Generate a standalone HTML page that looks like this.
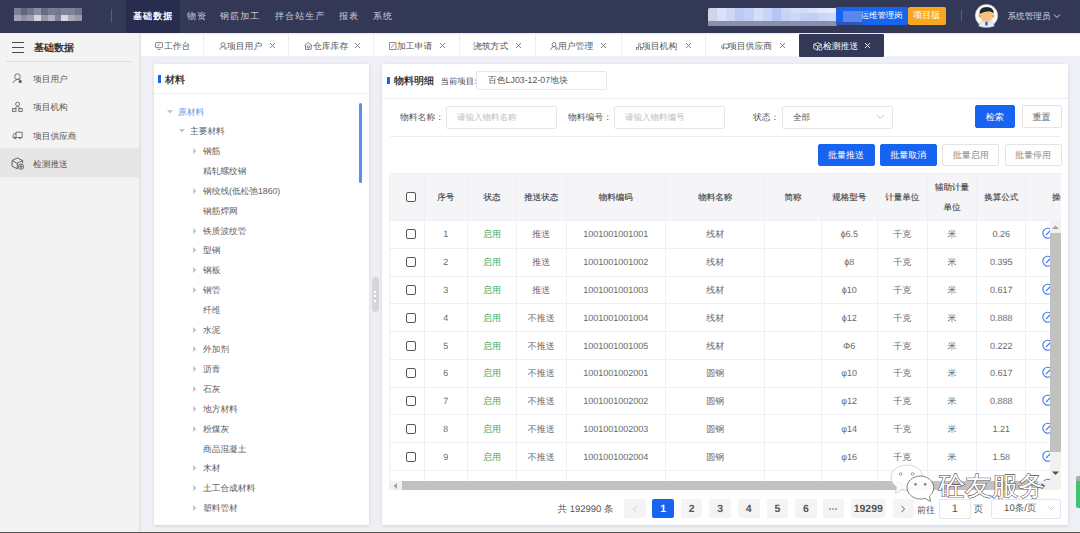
<!DOCTYPE html>
<html><head><meta charset="utf-8">
<style>
*{box-sizing:border-box;margin:0;padding:0}
html,body{width:1080px;height:533px;overflow:hidden;background:#eef0f5;font-family:"Liberation Sans",sans-serif;color:#333;font-size:9px;text-rendering:geometricPrecision}
.a{position:absolute}
#top{left:0;top:0;width:1080px;height:33px;background:#343857}
.nav{top:0;height:33px;line-height:32px;color:#c9cbd8;font-size:9px;letter-spacing:1.1px;white-space:nowrap}
#side{left:0;top:33px;width:141px;height:500px;background:#f3f3f3;box-shadow:inset -2px 0 1.5px -0.5px #e0e0e2}
#tabs{left:141px;top:33px;width:939px;height:23px;background:#fff;border-top:1px solid #f4f4f8}
.tab{top:34px;height:22px;line-height:22px;font-size:9px;color:#444;white-space:nowrap;border-left:1px solid #ececec;text-align:center}
.tabt{top:39.7px;font-size:8.8px;line-height:12px;white-space:nowrap}
.card{background:#fff;box-shadow:0 1px 3px rgba(60,70,100,0.16)}
.tr{font-size:8.7px;color:#555;white-space:nowrap;line-height:12px}

.btn{height:22px;line-height:20px;text-align:center;font-size:9px;border-radius:2px;border:1px solid #e4e4e4;color:#777;background:#fff}
.btn.p{background:#1764f0;border-color:#1764f0;color:#fff}
.inp{height:22.5px;border:1px solid #e4e6ea;border-radius:2px;background:#fff;line-height:21.5px;font-size:8.5px;color:#bbb;padding-left:10px}
.lbl{font-size:8.8px;color:#555;line-height:23.5px;white-space:nowrap}
.th{font-size:8.5px;color:#444;font-weight:normal;-webkit-text-stroke:0.15px #444;text-align:center;white-space:nowrap}
.td{font-size:9px;color:#6a6a6a;text-align:center;white-space:nowrap}
.vl{width:1px;background:#eef0f6}
.hl{height:1px;background:#eef0f6}
.cb{width:10px;height:10px;border:1px solid #555;border-radius:2px;background:#fff}
.pg{top:498.5px;height:19.5px;line-height:20.5px;width:21.5px;background:#f4f4f5;color:#555;font-weight:bold;font-size:10.5px;text-align:center;border-radius:2px}
</style></head><body>
<!-- top bar -->
<div class="a" id="top"></div>
<div class="a" style="left:13.70px;top:8px;width:6.9px;height:6.6px;background:#7d8096;filter:blur(0.3px)"></div><div class="a" style="left:13.70px;top:14.6px;width:6.9px;height:6.7px;background:#a3a5b5;filter:blur(0.3px)"></div><div class="a" style="left:20.52px;top:8px;width:6.9px;height:6.6px;background:#62677f;filter:blur(0.3px)"></div><div class="a" style="left:20.52px;top:14.6px;width:6.9px;height:6.7px;background:#8e91a5;filter:blur(0.3px)"></div><div class="a" style="left:27.34px;top:8px;width:6.9px;height:6.6px;background:#727690;filter:blur(0.3px)"></div><div class="a" style="left:27.34px;top:14.6px;width:6.9px;height:6.7px;background:#9c9eb0;filter:blur(0.3px)"></div><div class="a" style="left:34.16px;top:8px;width:6.9px;height:6.6px;background:#8a8da3;filter:blur(0.3px)"></div><div class="a" style="left:34.16px;top:14.6px;width:6.9px;height:6.7px;background:#d3d5de;filter:blur(0.3px)"></div><div class="a" style="left:40.98px;top:8px;width:6.9px;height:6.6px;background:#686c85;filter:blur(0.3px)"></div><div class="a" style="left:40.98px;top:14.6px;width:6.9px;height:6.7px;background:#9598ab;filter:blur(0.3px)"></div><div class="a" style="left:47.80px;top:8px;width:6.9px;height:6.6px;background:#7a7d95;filter:blur(0.3px)"></div><div class="a" style="left:47.80px;top:14.6px;width:6.9px;height:6.7px;background:#b0b2c0;filter:blur(0.3px)"></div><div class="a" style="left:54.62px;top:8px;width:6.9px;height:6.6px;background:#737790;filter:blur(0.3px)"></div><div class="a" style="left:54.62px;top:14.6px;width:6.9px;height:6.7px;background:#7f8298;filter:blur(0.3px)"></div><div class="a" style="left:61.44px;top:8px;width:6.9px;height:6.6px;background:#7f8298;filter:blur(0.3px)"></div><div class="a" style="left:61.44px;top:14.6px;width:6.9px;height:6.7px;background:#d7d8e0;filter:blur(0.3px)"></div><div class="a" style="left:68.26px;top:8px;width:6.9px;height:6.6px;background:#7d8096;filter:blur(0.3px)"></div><div class="a" style="left:68.26px;top:14.6px;width:6.9px;height:6.7px;background:#aaacbb;filter:blur(0.3px)"></div><div class="a" style="left:75.08px;top:8px;width:6.9px;height:6.6px;background:#717590;filter:blur(0.3px)"></div><div class="a" style="left:75.08px;top:14.6px;width:6.9px;height:6.7px;background:#9799ac;filter:blur(0.3px)"></div>
<div class="a" style="left:111px;top:9px;width:1px;height:13px;background:#5a5e7c"></div>
<div class="a" style="left:126px;top:0;width:54px;height:33px;background:#282c4e"></div>
<div class="a nav" style="left:133px;color:#fff;font-weight:bold">基础数据</div>
<div class="a nav" style="left:187px">物资</div>
<div class="a nav" style="left:220px">钢筋加工</div>
<div class="a nav" style="left:275px">拌合站生产</div>
<div class="a nav" style="left:339px">报表</div>
<div class="a nav" style="left:373px">系统</div>

<div class="a" style="left:707.6px;top:7.5px;width:129px;height:18px;border-radius:2px 3px 0 0;overflow:hidden;background:#8a90ab"><div class="a" style="left:0.0px;top:0;width:9.3px;height:13.4px;background:#d0d4e6"></div><div class="a" style="left:9.2px;top:0;width:9.3px;height:13.4px;background:#d8e0fa"></div><div class="a" style="left:18.4px;top:0;width:9.3px;height:13.4px;background:#cdd8f8"></div><div class="a" style="left:27.6px;top:0;width:9.3px;height:13.4px;background:#bccaf6"></div><div class="a" style="left:36.8px;top:0;width:9.3px;height:13.4px;background:#c3cff7"></div><div class="a" style="left:46.0px;top:0;width:9.3px;height:13.4px;background:#d5def9"></div><div class="a" style="left:55.2px;top:0;width:9.3px;height:13.4px;background:#c8d3f8"></div><div class="a" style="left:64.4px;top:0;width:9.3px;height:13.4px;background:#b4c6f6"></div><div class="a" style="left:73.6px;top:0;width:9.3px;height:13.4px;background:#c6d2f8"></div><div class="a" style="left:82.8px;top:0;width:9.3px;height:13.4px;background:#cdd7f8"></div><div class="a" style="left:92.0px;top:0;width:9.3px;height:13.4px;background:#c4d0f7"></div><div class="a" style="left:101.2px;top:0;width:9.3px;height:13.4px;background:#c0cdf6"></div><div class="a" style="left:110.4px;top:0;width:9.3px;height:13.4px;background:#cbd5f8"></div><div class="a" style="left:119.6px;top:0;width:9.3px;height:13.4px;background:#d0d9f8"></div><div class="a" style="left:70px;top:0;width:59px;height:5px;background:linear-gradient(90deg,rgba(230,236,252,0),#e8edfc)"></div></div>

<div class="a" style="left:836.2px;top:7px;width:71.5px;height:17.5px;background:#1764f0;border-radius:0 2px 2px 0;color:#fff;font-size:8.4px;line-height:17.5px;padding-left:24.5px;white-space:nowrap">运维管理岗</div>
<div class="a" style="left:843px;top:11.4px;width:19px;height:11.5px;background:#5a87ee;filter:blur(0.5px)"></div><div class="a" style="left:836.2px;top:21.5px;width:27px;height:3.5px;background:#2f55b5;border-radius:0 0 4px 0;filter:blur(0.4px)"></div>
<div class="a" style="left:907.7px;top:7px;width:38px;height:17.5px;background:#f7a81e;border-radius:2px;color:#fff;font-size:9px;line-height:17.5px;text-align:center">项目版</div>
<div class="a" style="left:961px;top:10px;width:1px;height:11px;background:#5a5e7c"></div>
<svg class="a" style="left:974px;top:3px" width="25" height="25" viewBox="0 0 25 25">
<circle cx="12.5" cy="12.6" r="11.2" fill="#fafafa" stroke="#c8c8cc" stroke-width="0.6"/>
<path d="M4.5 23 Q6 17.5 12.5 17.5 Q19 17.5 20.5 23 Q16.5 24.5 12.5 24.5 Q8.5 24.5 4.5 23Z" fill="#e8ecf2" stroke="#9aa" stroke-width="0.4"/>
<rect x="11.3" y="18" width="2.4" height="4.5" fill="#1f6cc8"/>
<ellipse cx="12.5" cy="12.5" rx="6.6" ry="6.5" fill="#f8c182"/>
<ellipse cx="5.8" cy="13" rx="1.3" ry="1.8" fill="#f2a85e"/><ellipse cx="19.2" cy="13" rx="1.3" ry="1.8" fill="#f2a85e"/>
<path d="M5.5 11 Q5 4 12.8 4 Q20 4.2 19.6 10.5 Q18 8.5 15 8.2 Q10 8.5 5.5 11Z" fill="#1d2a32"/>
</svg>




<div class="a nav" style="left:1007.5px;font-size:8.6px;letter-spacing:0;color:#d8dae4">系统管理员</div>
<svg class="a" style="left:1053px;top:11.5px" width="8" height="8" viewBox="0 0 8 8"><path d="M1 2.5 L4 5.5 L7 2.5" stroke="#d0d2dc" stroke-width="1" fill="none"/></svg>

<!-- sidebar -->
<div class="a" id="side"></div>
<div class="a" style="left:0;top:148px;width:140px;height:29px;background:#e6e6e6"></div>
<div class="a" style="left:12px;top:42.2px;width:11.5px;height:1.3px;background:#4a4a4a"></div>
<div class="a" style="left:12px;top:47px;width:11.5px;height:1.3px;background:#4a4a4a"></div>
<div class="a" style="left:12px;top:51.8px;width:11.5px;height:1.3px;background:#4a4a4a"></div>
<div class="a" style="left:34px;top:41.5px;font-size:10px;font-weight:bold;color:#333;line-height:14px">基础数据</div>
<div class="a" style="left:6px;top:61px;width:125px;height:1px;background:#dcdcdc"></div>
<svg class="a" style="left:10px;top:70px" width="14" height="14" viewBox="0 0 14 14" fill="none" stroke="#666" stroke-width="0.9">
<circle cx="7.5" cy="6.6" r="2.8"/><path d="M3.1 12.9 Q4 9.6 7.5 9.4 Q9 9.4 10 10"/><circle cx="10.2" cy="11.5" r="1.3" fill="#666"/></svg>
<svg class="a" style="left:10px;top:99px" width="14" height="14" viewBox="0 0 14 14" fill="none" stroke="#666" stroke-width="0.9">
<circle cx="7.6" cy="5.2" r="2"/><path d="M7.6 7.2 L4.4 10 M7.6 7.2 L10.6 10"/><rect x="2.6" y="9.6" width="3.4" height="2.8"/><rect x="8.8" y="9.6" width="3.4" height="2.8"/></svg>
<svg class="a" style="left:10px;top:128px" width="14" height="14" viewBox="0 0 14 14" fill="none" stroke="#666" stroke-width="0.9">
<path d="M6 4.2 H12.2 V9.6 H6 Z"/><path d="M6 5.6 H4.2 L3.1 7.4 V9.6 H6"/><circle cx="5" cy="10" r="0.8"/><circle cx="10" cy="10" r="0.8"/></svg>
<svg class="a" style="left:10px;top:156px" width="15" height="15" viewBox="0 0 15 15" fill="none" stroke="#555" stroke-width="0.9">
<path d="M7.3 1.9 L12.6 4.6 V7.2 M7.3 1.9 L2 4.6 V10.2 L7.3 12.8 M2 4.6 L7.3 7.3 L12.6 4.6 M7.3 7.3 V12.8"/><circle cx="11" cy="10.6" r="2.6" fill="#e6e6e6"/><path d="M9.6 10.6 H12.4 M11 9.2 V12"/></svg>
<div class="a tr" style="left:33px;top:73px;color:#555">项目用户</div>
<div class="a tr" style="left:33px;top:101px;color:#555">项目机构</div>
<div class="a tr" style="left:33px;top:130px;color:#555">项目供应商</div>
<div class="a tr" style="left:33px;top:158px;color:#555">检测推送</div>

<!-- tabs -->
<div class="a" id="tabs"></div>
<div class="a" style="left:141px;top:33px;width:939px;height:1px;background:#e9eaf0"></div>
<div class="a" style="left:203px;top:34px;width:1px;height:22px;background:#eeeff3"></div>
<div class="a" style="left:288px;top:34px;width:1px;height:22px;background:#eeeff3"></div>
<div class="a" style="left:373px;top:34px;width:1px;height:22px;background:#eeeff3"></div>
<div class="a" style="left:459px;top:34px;width:1px;height:22px;background:#eeeff3"></div>
<div class="a" style="left:535px;top:34px;width:1px;height:22px;background:#eeeff3"></div>
<div class="a" style="left:621px;top:34px;width:1px;height:22px;background:#eeeff3"></div>
<div class="a" style="left:705px;top:34px;width:1px;height:22px;background:#eeeff3"></div>
<div class="a" style="left:799px;top:34px;width:85px;height:22.5px;background:#343857;border-radius:1px"></div>
<svg class="a" style="left:154.5px;top:42px" width="8" height="8" viewBox="0 0 8 8" fill="none" stroke="#666" stroke-width="0.8"><rect x="0.6" y="0.6" width="6.8" height="5" rx="0.6"/><path d="M2.5 7.4H5.5M2.4 4 L4.6 2.2"/></svg>
<svg class="a" style="left:218.5px;top:42px" width="9" height="8" viewBox="0 0 9 8" fill="none" stroke="#666" stroke-width="0.8"><circle cx="4" cy="2.6" r="2"/><path d="M0.8 7.6Q1.4 4.8 4 4.6Q5.5 4.6 6.3 5.4"/><circle cx="6.6" cy="6.5" r="0.9"/></svg>
<svg class="a" style="left:304px;top:42px" width="9" height="8" viewBox="0 0 9 8" fill="none" stroke="#666" stroke-width="0.8"><path d="M0.6 3.6L4.3 0.7L8 3.6M1.5 3V7.4H7.2V3"/><circle cx="4.3" cy="5" r="1.2"/></svg>
<svg class="a" style="left:389px;top:42px" width="8" height="8" viewBox="0 0 8 8" fill="none" stroke="#777" stroke-width="0.8"><rect x="0.6" y="0.6" width="6.4" height="6.8"/><path d="M2 5.6L5.8 2"/></svg>
<svg class="a" style="left:550px;top:42px" width="9" height="8" viewBox="0 0 9 8" fill="none" stroke="#666" stroke-width="0.8"><circle cx="4" cy="2.6" r="2"/><path d="M0.8 7.6Q1.4 4.8 4 4.6Q5.5 4.6 6.3 5.4"/><circle cx="6.6" cy="6.5" r="0.9"/></svg>
<svg class="a" style="left:635.5px;top:42.5px" width="7" height="7" viewBox="0 0 8 8" fill="none" stroke="#666" stroke-width="0.8"><circle cx="4" cy="1.8" r="1.3"/><path d="M4 3.1L2 5M4 3.1L6 5"/><rect x="0.6" y="5" width="2.4" height="2.2"/><rect x="5" y="5" width="2.4" height="2.2"/></svg>
<svg class="a" style="left:720.5px;top:42.5px" width="8" height="7" viewBox="0 0 9 8" fill="none" stroke="#666" stroke-width="0.8"><path d="M3 1.2H8.4V5.6H3ZM3 2.4H1.6L0.7 3.8V5.6H3"/><circle cx="2.4" cy="6.4" r="0.6"/><circle cx="6.6" cy="6.4" r="0.6"/></svg>
<svg class="a" style="left:812.5px;top:41.5px" width="10" height="9" viewBox="0 0 10 9" fill="none" stroke="#fff" stroke-width="0.8"><path d="M4.6 0.6L8.4 2.4V4.2M4.6 0.6L0.8 2.4V6.4L4.6 8.3M0.8 2.4L4.6 4.2L8.4 2.4M4.6 4.2V8.3"/><circle cx="7.4" cy="6.6" r="1.8" fill="#33375a"/></svg>
<div class="a tabt" style="left:164px;color:#555">工作台</div>
<div class="a tabt" style="left:227px;color:#555">项目用户</div>
<svg class="a" style="left:269px;top:42px" width="7" height="7" viewBox="0 0 7 7"><path d="M1 1L6 6M6 1L1 6" stroke="#777" stroke-width="0.9"/></svg>
<div class="a tabt" style="left:313px;color:#555">仓库库存</div>
<svg class="a" style="left:354px;top:42px" width="7" height="7" viewBox="0 0 7 7"><path d="M1 1L6 6M6 1L1 6" stroke="#777" stroke-width="0.9"/></svg>
<div class="a tabt" style="left:397px;color:#555">加工申请</div>
<svg class="a" style="left:439px;top:42px" width="7" height="7" viewBox="0 0 7 7"><path d="M1 1L6 6M6 1L1 6" stroke="#777" stroke-width="0.9"/></svg>
<div class="a tabt" style="left:473px;color:#555">浇筑方式</div>
<svg class="a" style="left:515px;top:42px" width="7" height="7" viewBox="0 0 7 7"><path d="M1 1L6 6M6 1L1 6" stroke="#777" stroke-width="0.9"/></svg>
<div class="a tabt" style="left:558px;color:#555">用户管理</div>
<svg class="a" style="left:600px;top:42px" width="7" height="7" viewBox="0 0 7 7"><path d="M1 1L6 6M6 1L1 6" stroke="#777" stroke-width="0.9"/></svg>
<div class="a tabt" style="left:642px;color:#555">项目机构</div>
<svg class="a" style="left:685px;top:42px" width="7" height="7" viewBox="0 0 7 7"><path d="M1 1L6 6M6 1L1 6" stroke="#777" stroke-width="0.9"/></svg>
<div class="a tabt" style="left:728px;color:#555">项目供应商</div>
<svg class="a" style="left:779px;top:42px" width="7" height="7" viewBox="0 0 7 7"><path d="M1 1L6 6M6 1L1 6" stroke="#777" stroke-width="0.9"/></svg>
<div class="a tabt" style="left:823px;color:#fff">检测推送</div>
<svg class="a" style="left:864px;top:42px" width="7" height="7" viewBox="0 0 7 7"><path d="M1 1L6 6M6 1L1 6" stroke="#fff" stroke-width="0.9"/></svg>

<!-- cards -->
<div class="a card" style="left:154px;top:64px;width:215px;height:461px"></div>

<div class="a card" style="left:382px;top:64px;width:686px;height:461px"></div>
<div class="a" style="left:158px;top:75px;width:3px;height:8px;background:#1764f0"></div>
<div class="a" style="left:165px;top:73.5px;font-size:10px;color:#222;-webkit-text-stroke:0.25px #222;line-height:14px">材料</div>
<div class="a" style="left:154px;top:93px;width:215px;height:1px;background:#eceef2"></div>
<div class="a" style="left:359px;top:103px;width:3px;height:80px;background:#5b8def;border-radius:1.5px"></div>
<div class="a tr" style="left:178px;top:105.6px;color:#6497f0">原材料</div>
<svg class="a" style="left:167px;top:109.6px" width="6" height="4" viewBox="0 0 6 4"><path d="M0 0H6L3 3.5Z" fill="#c4c6cc"/></svg>
<div class="a tr" style="left:190px;top:125.4px;color:#5e5e5e">主要材料</div>
<svg class="a" style="left:179px;top:129.4px" width="6" height="4" viewBox="0 0 6 4"><path d="M0 0H6L3 3.5Z" fill="#c4c6cc"/></svg>
<div class="a tr" style="left:203px;top:145.2px;color:#5e5e5e">钢筋</div>
<svg class="a" style="left:193px;top:148.2px" width="4" height="6" viewBox="0 0 4 6"><path d="M0 0V6L3.5 3Z" fill="#c4c6cc"/></svg>
<div class="a tr" style="left:203px;top:165.1px;color:#5e5e5e">精轧螺纹钢</div>
<div class="a tr" style="left:203px;top:184.9px;color:#5e5e5e">钢绞线(低松弛1860)</div>
<svg class="a" style="left:193px;top:187.9px" width="4" height="6" viewBox="0 0 4 6"><path d="M0 0V6L3.5 3Z" fill="#c4c6cc"/></svg>
<div class="a tr" style="left:203px;top:204.7px;color:#5e5e5e">钢筋焊网</div>
<div class="a tr" style="left:203px;top:224.5px;color:#5e5e5e">铁质波纹管</div>
<svg class="a" style="left:193px;top:227.5px" width="4" height="6" viewBox="0 0 4 6"><path d="M0 0V6L3.5 3Z" fill="#c4c6cc"/></svg>
<div class="a tr" style="left:203px;top:244.3px;color:#5e5e5e">型钢</div>
<svg class="a" style="left:193px;top:247.3px" width="4" height="6" viewBox="0 0 4 6"><path d="M0 0V6L3.5 3Z" fill="#c4c6cc"/></svg>
<div class="a tr" style="left:203px;top:264.2px;color:#5e5e5e">钢板</div>
<svg class="a" style="left:193px;top:267.2px" width="4" height="6" viewBox="0 0 4 6"><path d="M0 0V6L3.5 3Z" fill="#c4c6cc"/></svg>
<div class="a tr" style="left:203px;top:284.0px;color:#5e5e5e">钢管</div>
<svg class="a" style="left:193px;top:287.0px" width="4" height="6" viewBox="0 0 4 6"><path d="M0 0V6L3.5 3Z" fill="#c4c6cc"/></svg>
<div class="a tr" style="left:203px;top:303.8px;color:#5e5e5e">纤维</div>
<div class="a tr" style="left:203px;top:323.6px;color:#5e5e5e">水泥</div>
<svg class="a" style="left:193px;top:326.6px" width="4" height="6" viewBox="0 0 4 6"><path d="M0 0V6L3.5 3Z" fill="#c4c6cc"/></svg>
<div class="a tr" style="left:203px;top:343.4px;color:#5e5e5e">外加剂</div>
<svg class="a" style="left:193px;top:346.4px" width="4" height="6" viewBox="0 0 4 6"><path d="M0 0V6L3.5 3Z" fill="#c4c6cc"/></svg>
<div class="a tr" style="left:203px;top:363.3px;color:#5e5e5e">沥青</div>
<svg class="a" style="left:193px;top:366.3px" width="4" height="6" viewBox="0 0 4 6"><path d="M0 0V6L3.5 3Z" fill="#c4c6cc"/></svg>
<div class="a tr" style="left:203px;top:383.1px;color:#5e5e5e">石灰</div>
<svg class="a" style="left:193px;top:386.1px" width="4" height="6" viewBox="0 0 4 6"><path d="M0 0V6L3.5 3Z" fill="#c4c6cc"/></svg>
<div class="a tr" style="left:203px;top:402.9px;color:#5e5e5e">地方材料</div>
<svg class="a" style="left:193px;top:405.9px" width="4" height="6" viewBox="0 0 4 6"><path d="M0 0V6L3.5 3Z" fill="#c4c6cc"/></svg>
<div class="a tr" style="left:203px;top:422.7px;color:#5e5e5e">粉煤灰</div>
<svg class="a" style="left:193px;top:425.7px" width="4" height="6" viewBox="0 0 4 6"><path d="M0 0V6L3.5 3Z" fill="#c4c6cc"/></svg>
<div class="a tr" style="left:203px;top:442.5px;color:#5e5e5e">商品混凝土</div>
<div class="a tr" style="left:203px;top:462.4px;color:#5e5e5e">木材</div>
<svg class="a" style="left:193px;top:465.4px" width="4" height="6" viewBox="0 0 4 6"><path d="M0 0V6L3.5 3Z" fill="#c4c6cc"/></svg>
<div class="a tr" style="left:203px;top:482.2px;color:#5e5e5e">土工合成材料</div>
<svg class="a" style="left:193px;top:485.2px" width="4" height="6" viewBox="0 0 4 6"><path d="M0 0V6L3.5 3Z" fill="#c4c6cc"/></svg>
<div class="a tr" style="left:203px;top:502.0px;color:#5e5e5e">塑料管材</div>
<svg class="a" style="left:193px;top:505.0px" width="4" height="6" viewBox="0 0 4 6"><path d="M0 0V6L3.5 3Z" fill="#c4c6cc"/></svg>
<div class="a" style="left:372px;top:277px;width:6.5px;height:35px;background:#d6d6d8;border-radius:3.5px"></div>
<div class="a" style="left:374.3px;top:290.5px;width:2px;height:2px;background:#fff"></div>
<div class="a" style="left:374.3px;top:295px;width:2px;height:2px;background:#fff"></div>
<div class="a" style="left:374.3px;top:299.5px;width:2px;height:2px;background:#fff"></div>
<div class="a" style="left:386.5px;top:76.5px;width:3px;height:7px;background:#1764f0"></div>
<div class="a" style="left:394px;top:75px;font-size:10px;color:#222;-webkit-text-stroke:0.25px #222;line-height:14px">物料明细</div>
<div class="a lbl" style="left:440.5px;top:70px;font-size:8.4px;color:#444">当前项目:</div>
<div class="a" style="left:476px;top:71px;width:131px;height:19px;border:1px solid #e6e8ec;border-radius:2px;font-size:8.8px;color:#555;line-height:17px;padding-left:11px;white-space:nowrap">百色LJ03-12-07地块</div>
<div class="a" style="left:382px;top:98px;width:686px;height:1px;background:#eceef2"></div>
<div class="a lbl" style="left:400px;top:106px">物料名称：</div>
<div class="a inp" style="left:446px;top:106px;width:111px">请输入物料名称</div>
<div class="a lbl" style="left:568px;top:106px">物料编号：</div>
<div class="a inp" style="left:614px;top:106px;width:111px">请输入物料编号</div>
<div class="a lbl" style="left:753px;top:106px">状态：</div>
<div class="a inp" style="left:782px;top:106px;width:111px;color:#555">全部</div>
<svg class="a" style="left:876px;top:114px" width="9" height="6" viewBox="0 0 9 6"><path d="M1 1L4.5 4.5L8 1" stroke="#bbb" stroke-width="0.9" fill="none"/></svg>
<div class="a btn p" style="left:975px;top:105px;width:39.5px;height:23px;line-height:22.5px">检索</div>
<div class="a btn" style="left:1021.5px;top:105px;width:40px;height:23px;line-height:22.5px;color:#666">重置</div>
<div class="a" style="left:390px;top:136px;width:671px;height:1px;background:#eceef2"></div>
<div class="a btn p" style="left:817.5px;top:143.5px;width:57px;height:22px;color:#fff">批量推送</div>
<div class="a btn p" style="left:879.7px;top:143.5px;width:57px;height:22px;color:#fff">批量取消</div>
<div class="a btn" style="left:942.2px;top:143.5px;width:57px;height:22px;color:#888">批量启用</div>
<div class="a btn" style="left:1004.5px;top:143.5px;width:57px;height:22px;color:#888">批量停用</div>
<div class="a" style="left:389px;top:173px;width:672px;height:308px;overflow:hidden;background:#fff">
<div class="a" style="left:0;top:0;width:700px;height:47.5px;background:#f5f5f7"></div>
<div class="a hl" style="left:0;top:0;width:700px"></div>
<div class="a vl" style="left:35px;top:0;height:320px"></div>
<div class="a vl" style="left:78px;top:0;height:320px"></div>
<div class="a vl" style="left:127px;top:0;height:320px"></div>
<div class="a vl" style="left:177px;top:0;height:320px"></div>
<div class="a vl" style="left:276px;top:0;height:320px"></div>
<div class="a vl" style="left:375px;top:0;height:320px"></div>
<div class="a vl" style="left:432px;top:0;height:320px"></div>
<div class="a vl" style="left:488px;top:0;height:320px"></div>
<div class="a vl" style="left:538px;top:0;height:320px"></div>
<div class="a vl" style="left:587px;top:0;height:320px"></div>
<div class="a vl" style="left:636px;top:0;height:320px"></div>
<div class="a vl" style="left:0;top:0;height:320px"></div>
<div class="a hl" style="left:0;top:47px;width:700px"></div>
<div class="a hl" style="left:0;top:75px;width:700px"></div>
<div class="a hl" style="left:0;top:103px;width:700px"></div>
<div class="a hl" style="left:0;top:130px;width:700px"></div>
<div class="a hl" style="left:0;top:158px;width:700px"></div>
<div class="a hl" style="left:0;top:186px;width:700px"></div>
<div class="a hl" style="left:0;top:214px;width:700px"></div>
<div class="a hl" style="left:0;top:241px;width:700px"></div>
<div class="a hl" style="left:0;top:269px;width:700px"></div>
<div class="a hl" style="left:0;top:297px;width:700px"></div>
<div class="a hl" style="left:0;top:325px;width:700px"></div>
<div class="a cb" style="left:16.7px;top:19.4px"></div>
<div class="a th" style="left:35.3px;width:43.1px;top:18.0px;line-height:12px">序号</div>
<div class="a th" style="left:78.4px;width:49.1px;top:18.0px;line-height:12px">状态</div>
<div class="a th" style="left:127.5px;width:49.6px;top:18.0px;line-height:12px">推送状态</div>
<div class="a th" style="left:177.1px;width:99.5px;top:18.0px;line-height:12px">物料编码</div>
<div class="a th" style="left:276.6px;width:99.1px;top:18.0px;line-height:12px">物料名称</div>
<div class="a th" style="left:375.7px;width:56.4px;top:18.0px;line-height:12px">简称</div>
<div class="a th" style="left:432.1px;width:56.2px;top:18.0px;line-height:12px">规格型号</div>
<div class="a th" style="left:488.3px;width:50.0px;top:18.0px;line-height:12px">计量单位</div>
<div class="a th" style="left:538.3px;width:49.4px;top:4px;line-height:20.3px">辅助计量<br>单位</div>
<div class="a th" style="left:587.7px;width:49.0px;top:18.0px;line-height:12px">换算公式</div>
<div class="a th" style="left:663px;top:18px;line-height:12px">操作</div>
<div class="a cb" style="left:16.7px;top:56.4px"></div>
<div class="a td" style="left:35.3px;width:43.1px;top:55.4px;line-height:12px">1</div>
<div class="a td" style="left:78.4px;width:49.1px;top:55.4px;line-height:12px;color:#3aa865">启用</div>
<div class="a td" style="left:127.5px;width:49.6px;top:55.4px;line-height:12px">推送</div>
<div class="a td" style="left:177.1px;width:99.5px;top:55.4px;line-height:12px">1001001001001</div>
<div class="a td" style="left:276.6px;width:99.1px;top:55.4px;line-height:12px">线材</div>
<div class="a td" style="left:432.1px;width:56.2px;top:55.4px;line-height:12px">ϕ6.5</div>
<div class="a td" style="left:488.3px;width:50.0px;top:55.4px;line-height:12px">千克</div>
<div class="a td" style="left:538.3px;width:49.4px;top:55.4px;line-height:12px">米</div>
<div class="a td" style="left:587.7px;width:49.0px;top:55.4px;line-height:12px">0.26</div>
<svg class="a" style="left:653px;top:54.4px" width="12" height="12" viewBox="0 0 12 12"><path d="M9.5 2.8A5 5 0 1 0 10.8 7" stroke="#3f7cf2" stroke-width="1.1" fill="none"/><path d="M4 8L8.5 3.5" stroke="#3f7cf2" stroke-width="1.1"/></svg>
<div class="a cb" style="left:16.7px;top:84.2px"></div>
<div class="a td" style="left:35.3px;width:43.1px;top:83.2px;line-height:12px">2</div>
<div class="a td" style="left:78.4px;width:49.1px;top:83.2px;line-height:12px;color:#3aa865">启用</div>
<div class="a td" style="left:127.5px;width:49.6px;top:83.2px;line-height:12px">推送</div>
<div class="a td" style="left:177.1px;width:99.5px;top:83.2px;line-height:12px">1001001001002</div>
<div class="a td" style="left:276.6px;width:99.1px;top:83.2px;line-height:12px">线材</div>
<div class="a td" style="left:432.1px;width:56.2px;top:83.2px;line-height:12px">ϕ8</div>
<div class="a td" style="left:488.3px;width:50.0px;top:83.2px;line-height:12px">千克</div>
<div class="a td" style="left:538.3px;width:49.4px;top:83.2px;line-height:12px">米</div>
<div class="a td" style="left:587.7px;width:49.0px;top:83.2px;line-height:12px">0.395</div>
<svg class="a" style="left:653px;top:82.2px" width="12" height="12" viewBox="0 0 12 12"><path d="M9.5 2.8A5 5 0 1 0 10.8 7" stroke="#3f7cf2" stroke-width="1.1" fill="none"/><path d="M4 8L8.5 3.5" stroke="#3f7cf2" stroke-width="1.1"/></svg>
<div class="a cb" style="left:16.7px;top:112.0px"></div>
<div class="a td" style="left:35.3px;width:43.1px;top:111.0px;line-height:12px">3</div>
<div class="a td" style="left:78.4px;width:49.1px;top:111.0px;line-height:12px;color:#3aa865">启用</div>
<div class="a td" style="left:127.5px;width:49.6px;top:111.0px;line-height:12px">推送</div>
<div class="a td" style="left:177.1px;width:99.5px;top:111.0px;line-height:12px">1001001001003</div>
<div class="a td" style="left:276.6px;width:99.1px;top:111.0px;line-height:12px">线材</div>
<div class="a td" style="left:432.1px;width:56.2px;top:111.0px;line-height:12px">ϕ10</div>
<div class="a td" style="left:488.3px;width:50.0px;top:111.0px;line-height:12px">千克</div>
<div class="a td" style="left:538.3px;width:49.4px;top:111.0px;line-height:12px">米</div>
<div class="a td" style="left:587.7px;width:49.0px;top:111.0px;line-height:12px">0.617</div>
<svg class="a" style="left:653px;top:110.0px" width="12" height="12" viewBox="0 0 12 12"><path d="M9.5 2.8A5 5 0 1 0 10.8 7" stroke="#3f7cf2" stroke-width="1.1" fill="none"/><path d="M4 8L8.5 3.5" stroke="#3f7cf2" stroke-width="1.1"/></svg>
<div class="a cb" style="left:16.7px;top:139.8px"></div>
<div class="a td" style="left:35.3px;width:43.1px;top:138.8px;line-height:12px">4</div>
<div class="a td" style="left:78.4px;width:49.1px;top:138.8px;line-height:12px;color:#3aa865">启用</div>
<div class="a td" style="left:127.5px;width:49.6px;top:138.8px;line-height:12px">不推送</div>
<div class="a td" style="left:177.1px;width:99.5px;top:138.8px;line-height:12px">1001001001004</div>
<div class="a td" style="left:276.6px;width:99.1px;top:138.8px;line-height:12px">线材</div>
<div class="a td" style="left:432.1px;width:56.2px;top:138.8px;line-height:12px">ϕ12</div>
<div class="a td" style="left:488.3px;width:50.0px;top:138.8px;line-height:12px">千克</div>
<div class="a td" style="left:538.3px;width:49.4px;top:138.8px;line-height:12px">米</div>
<div class="a td" style="left:587.7px;width:49.0px;top:138.8px;line-height:12px">0.888</div>
<svg class="a" style="left:653px;top:137.8px" width="12" height="12" viewBox="0 0 12 12"><path d="M9.5 2.8A5 5 0 1 0 10.8 7" stroke="#3f7cf2" stroke-width="1.1" fill="none"/><path d="M4 8L8.5 3.5" stroke="#3f7cf2" stroke-width="1.1"/></svg>
<div class="a cb" style="left:16.7px;top:167.6px"></div>
<div class="a td" style="left:35.3px;width:43.1px;top:166.6px;line-height:12px">5</div>
<div class="a td" style="left:78.4px;width:49.1px;top:166.6px;line-height:12px;color:#3aa865">启用</div>
<div class="a td" style="left:127.5px;width:49.6px;top:166.6px;line-height:12px">不推送</div>
<div class="a td" style="left:177.1px;width:99.5px;top:166.6px;line-height:12px">1001001001005</div>
<div class="a td" style="left:276.6px;width:99.1px;top:166.6px;line-height:12px">线材</div>
<div class="a td" style="left:432.1px;width:56.2px;top:166.6px;line-height:12px">Φ6</div>
<div class="a td" style="left:488.3px;width:50.0px;top:166.6px;line-height:12px">千克</div>
<div class="a td" style="left:538.3px;width:49.4px;top:166.6px;line-height:12px">米</div>
<div class="a td" style="left:587.7px;width:49.0px;top:166.6px;line-height:12px">0.222</div>
<svg class="a" style="left:653px;top:165.6px" width="12" height="12" viewBox="0 0 12 12"><path d="M9.5 2.8A5 5 0 1 0 10.8 7" stroke="#3f7cf2" stroke-width="1.1" fill="none"/><path d="M4 8L8.5 3.5" stroke="#3f7cf2" stroke-width="1.1"/></svg>
<div class="a cb" style="left:16.7px;top:195.4px"></div>
<div class="a td" style="left:35.3px;width:43.1px;top:194.4px;line-height:12px">6</div>
<div class="a td" style="left:78.4px;width:49.1px;top:194.4px;line-height:12px;color:#3aa865">启用</div>
<div class="a td" style="left:127.5px;width:49.6px;top:194.4px;line-height:12px">不推送</div>
<div class="a td" style="left:177.1px;width:99.5px;top:194.4px;line-height:12px">1001001002001</div>
<div class="a td" style="left:276.6px;width:99.1px;top:194.4px;line-height:12px">圆钢</div>
<div class="a td" style="left:432.1px;width:56.2px;top:194.4px;line-height:12px">φ10</div>
<div class="a td" style="left:488.3px;width:50.0px;top:194.4px;line-height:12px">千克</div>
<div class="a td" style="left:538.3px;width:49.4px;top:194.4px;line-height:12px">米</div>
<div class="a td" style="left:587.7px;width:49.0px;top:194.4px;line-height:12px">0.617</div>
<svg class="a" style="left:653px;top:193.4px" width="12" height="12" viewBox="0 0 12 12"><path d="M9.5 2.8A5 5 0 1 0 10.8 7" stroke="#3f7cf2" stroke-width="1.1" fill="none"/><path d="M4 8L8.5 3.5" stroke="#3f7cf2" stroke-width="1.1"/></svg>
<div class="a cb" style="left:16.7px;top:223.2px"></div>
<div class="a td" style="left:35.3px;width:43.1px;top:222.2px;line-height:12px">7</div>
<div class="a td" style="left:78.4px;width:49.1px;top:222.2px;line-height:12px;color:#3aa865">启用</div>
<div class="a td" style="left:127.5px;width:49.6px;top:222.2px;line-height:12px">不推送</div>
<div class="a td" style="left:177.1px;width:99.5px;top:222.2px;line-height:12px">1001001002002</div>
<div class="a td" style="left:276.6px;width:99.1px;top:222.2px;line-height:12px">圆钢</div>
<div class="a td" style="left:432.1px;width:56.2px;top:222.2px;line-height:12px">φ12</div>
<div class="a td" style="left:488.3px;width:50.0px;top:222.2px;line-height:12px">千克</div>
<div class="a td" style="left:538.3px;width:49.4px;top:222.2px;line-height:12px">米</div>
<div class="a td" style="left:587.7px;width:49.0px;top:222.2px;line-height:12px">0.888</div>
<svg class="a" style="left:653px;top:221.2px" width="12" height="12" viewBox="0 0 12 12"><path d="M9.5 2.8A5 5 0 1 0 10.8 7" stroke="#3f7cf2" stroke-width="1.1" fill="none"/><path d="M4 8L8.5 3.5" stroke="#3f7cf2" stroke-width="1.1"/></svg>
<div class="a cb" style="left:16.7px;top:251.0px"></div>
<div class="a td" style="left:35.3px;width:43.1px;top:250.0px;line-height:12px">8</div>
<div class="a td" style="left:78.4px;width:49.1px;top:250.0px;line-height:12px;color:#3aa865">启用</div>
<div class="a td" style="left:127.5px;width:49.6px;top:250.0px;line-height:12px">不推送</div>
<div class="a td" style="left:177.1px;width:99.5px;top:250.0px;line-height:12px">1001001002003</div>
<div class="a td" style="left:276.6px;width:99.1px;top:250.0px;line-height:12px">圆钢</div>
<div class="a td" style="left:432.1px;width:56.2px;top:250.0px;line-height:12px">φ14</div>
<div class="a td" style="left:488.3px;width:50.0px;top:250.0px;line-height:12px">千克</div>
<div class="a td" style="left:538.3px;width:49.4px;top:250.0px;line-height:12px">米</div>
<div class="a td" style="left:587.7px;width:49.0px;top:250.0px;line-height:12px">1.21</div>
<svg class="a" style="left:653px;top:249.0px" width="12" height="12" viewBox="0 0 12 12"><path d="M9.5 2.8A5 5 0 1 0 10.8 7" stroke="#3f7cf2" stroke-width="1.1" fill="none"/><path d="M4 8L8.5 3.5" stroke="#3f7cf2" stroke-width="1.1"/></svg>
<div class="a cb" style="left:16.7px;top:278.8px"></div>
<div class="a td" style="left:35.3px;width:43.1px;top:277.8px;line-height:12px">9</div>
<div class="a td" style="left:78.4px;width:49.1px;top:277.8px;line-height:12px;color:#3aa865">启用</div>
<div class="a td" style="left:127.5px;width:49.6px;top:277.8px;line-height:12px">不推送</div>
<div class="a td" style="left:177.1px;width:99.5px;top:277.8px;line-height:12px">1001001002004</div>
<div class="a td" style="left:276.6px;width:99.1px;top:277.8px;line-height:12px">圆钢</div>
<div class="a td" style="left:432.1px;width:56.2px;top:277.8px;line-height:12px">φ16</div>
<div class="a td" style="left:488.3px;width:50.0px;top:277.8px;line-height:12px">千克</div>
<div class="a td" style="left:538.3px;width:49.4px;top:277.8px;line-height:12px">米</div>
<div class="a td" style="left:587.7px;width:49.0px;top:277.8px;line-height:12px">1.58</div>
<svg class="a" style="left:653px;top:276.8px" width="12" height="12" viewBox="0 0 12 12"><path d="M9.5 2.8A5 5 0 1 0 10.8 7" stroke="#3f7cf2" stroke-width="1.1" fill="none"/><path d="M4 8L8.5 3.5" stroke="#3f7cf2" stroke-width="1.1"/></svg>
<svg class="a" style="left:653px;top:304.6px" width="12" height="12" viewBox="0 0 12 12"><path d="M9.5 2.8A5 5 0 1 0 10.8 7" stroke="#3f7cf2" stroke-width="1.1" fill="none"/><path d="M4 8L8.5 3.5" stroke="#3f7cf2" stroke-width="1.1"/></svg>
<div class="a" style="left:661.2px;top:47.6px;width:11px;height:260.1px;background:#f1f1f1"></div>
<div class="a" style="left:661.2px;top:60.0px;width:11px;height:219.4px;background:#c1c1c1"></div>
<svg class="a" style="left:663px;top:52px" width="7" height="5" viewBox="0 0 7 5"><path d="M0 4H7L3.5 0.5Z" fill="#a3a3a3"/></svg>
<svg class="a" style="left:663px;top:298px" width="7" height="5" viewBox="0 0 7 5"><path d="M0 0.5H7L3.5 4Z" fill="#505050"/></svg>
</div>
<div class="a" style="left:389px;top:480.7px;width:672px;height:9.8px;background:#f1f1f1"></div>
<div class="a" style="left:402px;top:480.7px;width:636px;height:9.8px;background:#c1c1c1"></div>
<svg class="a" style="left:393px;top:483px" width="5" height="6" viewBox="0 0 5 6"><path d="M4 0V6L0.5 3Z" fill="#a3a3a3"/></svg>
<svg class="a" style="left:1041px;top:483px" width="5" height="6" viewBox="0 0 5 6"><path d="M0.5 0V6L4 3Z" fill="#505050"/></svg>
<div class="a" style="left:557.5px;top:503.7px;font-size:9.5px;color:#555;line-height:12px;white-space:nowrap">共 192990 条</div>
<div class="a pg" style="left:624.3px"></div><svg class="a" style="left:632px;top:505px" width="6" height="8" viewBox="0 0 6 8"><path d="M4.5 0.8L1.5 4L4.5 7.2" stroke="#c8cad0" stroke-width="0.9" fill="none"/></svg>
<div class="a pg" style="left:652.3px;background:#1764f0;color:#fff">1</div>
<div class="a pg" style="left:680.8px">2</div>
<div class="a pg" style="left:709.4px">3</div>
<div class="a pg" style="left:738.0px">4</div>
<div class="a pg" style="left:766.6px">5</div>
<div class="a pg" style="left:795.2px">6</div>
<div class="a pg" style="left:822.8px;width:21px;font-size:9px">···</div>
<div class="a pg" style="left:851px;width:34.6px">19299</div>
<div class="a pg" style="left:892.6px"></div><svg class="a" style="left:900px;top:505px" width="6" height="8" viewBox="0 0 6 8"><path d="M1.5 0.8L4.5 4L1.5 7.2" stroke="#555" stroke-width="0.9" fill="none"/></svg>
<div class="a" style="left:917px;top:503.5px;font-size:9px;color:#555;line-height:12px">前往</div>
<div class="a" style="left:938.7px;top:498.5px;width:32px;height:20px;border:1px solid #e4e6ea;border-radius:2px;text-align:center;font-size:11px;line-height:18px;color:#555">1</div>
<div class="a" style="left:973.7px;top:504px;font-size:9.5px;color:#555;line-height:12px">页</div>
<div class="a" style="left:990.6px;top:498.5px;width:70px;height:20px;border:1px solid #e4e6ea;border-radius:2px;font-size:9.5px;line-height:18.5px;color:#555;padding-left:12.5px">10条/页</div>
<svg class="a" style="left:1048px;top:506px" width="7" height="5" viewBox="0 0 7 5"><path d="M0.5 0.5L3.5 3.5L6.5 0.5" stroke="#bbb" stroke-width="0.8" fill="none"/></svg>
<div class="a" style="left:1075.5px;top:476px;width:4.5px;height:32px;background:#3ec46d;border-radius:2px 0 0 2px;border-top:5px solid #a9aeaa"></div>
<svg class="a" style="left:880px;top:455px" width="180" height="55" viewBox="880 455 180 55">
<g fill="#fff" stroke="#8a8a8a" stroke-width="0.8" opacity="0.95">
<path d="M906.8 465 C898 465 891 470.5 891 477.5 C891 481.5 893 484.5 896.5 487 L895.5 493.5 L902 489.5 C903.5 490 905 490.2 906.8 490.2 C915.5 490.2 922.6 484.6 922.6 477.5 C922.6 470.5 915.5 465 906.8 465Z" stroke="#c8c8c8"/>
<path d="M920.3 476 C913 476 907 481.2 907 487.5 C907 493.8 913 499 920.3 499 C922 499 923.5 498.8 925 498.3 L930.5 501.5 L929.5 496 C932.3 493.8 933.7 490.8 933.7 487.5 C933.7 481.2 927.6 476 920.3 476Z" stroke="#6e6e6e" stroke-width="0.9"/>
</g>
<circle cx="900.7" cy="474" r="1.3" fill="#fff" stroke="#666" stroke-width="0.6"/>
<circle cx="912.6" cy="474" r="1.3" fill="#fff" stroke="#666" stroke-width="0.6"/>
<circle cx="915.6" cy="484.3" r="1.4" fill="#888"/>
<circle cx="925.2" cy="484.3" r="1.4" fill="#888"/>
<text x="938.5" y="494.6" font-size="26.6" font-family="Liberation Sans, sans-serif" fill="#fff" stroke="#4a4a4a" stroke-width="1.1" paint-order="stroke">砼友服务</text>
</svg>
<div class="a" style="left:0;top:531.5px;width:1080px;height:1.5px;background:#555"></div>
</body></html>
